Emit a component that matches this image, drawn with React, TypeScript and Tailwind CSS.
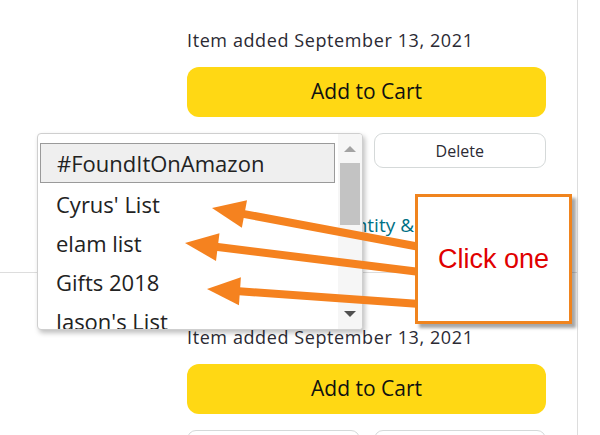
import React from 'react';

const lists = ["Cyrus' List", 'elam list', 'Gifts 2018', "Jason's List"];

// arrow from tail to tip, shaft + triangular head
const Arrow: React.FC<{ tail: [number, number]; tip: [number, number] }> = ({ tail, tip }) => {
  const dx = tip[0] - tail[0];
  const dy = tip[1] - tail[1];
  const len = Math.sqrt(dx * dx + dy * dy);
  const ux = dx / len;
  const uy = dy / len;
  const headLen = 33;
  const half = 14;
  const bx = tip[0] - ux * headLen;
  const by = tip[1] - uy * headLen;
  const p1 = `${bx - uy * half},${by + ux * half}`;
  const p2 = `${bx + uy * half},${by - ux * half}`;
  return (
    <g>
      <line x1={tail[0]} y1={tail[1]} x2={bx + ux * 4} y2={by + uy * 4} stroke="#F5821F" strokeWidth={8} />
      <polygon points={`${tip[0]},${tip[1]} ${p1} ${p2}`} fill="#F5821F" />
    </g>
  );
};

const ItemBlock: React.FC<{ top: string; children?: React.ReactNode }> = ({ top, children }) => (
  <div className={`pl-[187px] pr-[31px] ${top}`}>
    <p className="text-[18px] leading-[20px] tracking-[0.6px] text-[#2b2a33]">Item added September 13, 2021</p>
    <button className="mt-[17px] w-full h-[50px] rounded-[12px] bg-[#FFD814] text-[21px] text-[#0F1111]">
      Add to Cart
    </button>
    <div className="mt-[16px] flex gap-[14px]">
      <button className="flex-1 h-[35px] rounded-[9px] border border-[#d5d9d9] bg-white text-[16px] text-[#2b2a33]">
        Move
      </button>
      <button className="flex-1 h-[35px] rounded-[9px] border border-[#d5d9d9] bg-white text-[16px] text-[#2b2a33]">
        Delete
      </button>
    </div>
    {children}
  </div>
);

export default function App() {
  return (
    <div className="relative w-[600px] h-[435px] overflow-hidden bg-white font-['Open_Sans',sans-serif]">
      <div className="w-[578px] h-full border-r border-[#dddddd]">
        <div className="border-b border-[#dddddd] pb-[35px]">
          <ItemBlock top="pt-[30px]">
            <p className="mt-[45px] text-[19px] leading-[24px] text-[#007185]">Add comment, quantity &amp; priority</p>
          </ItemBlock>
        </div>
        <ItemBlock top="pt-[54px]" />
      </div>

      {/* dropdown list */}
      <div className="absolute left-[37px] top-[133px] w-[326px] h-[197px] flex rounded-[4px] border border-[#cfcfcf] bg-white shadow-[2px_3px_5px_rgba(0,0,0,0.25)] overflow-hidden">
        <div className="flex-1 pl-[2px] pt-[9px] pr-[3px]">
          <div className="h-[40px] flex items-center pl-[16px] border border-[#9a9a9a] bg-[#efefef] text-[22px] text-[#222]">
            #FoundItOnAmazon
          </div>
          <div className="pt-[2px]">
            {lists.map((l) => (
              <div key={l} className="h-[39px] flex items-center pl-[16px] text-[22px] text-[#222]">
                {l}
              </div>
            ))}
          </div>
        </div>
        <div className="w-[24px] flex flex-col items-center bg-[#f6f6f6]">
          <div className="mt-[12px] w-0 h-0 border-x-[6px] border-x-transparent border-b-[6px] border-b-[#a3a3a3]" />
          <div className="mt-[11px] w-[20px] h-[62px] bg-[#c3c3c3]" />
          <div className="mt-auto mb-[12px] w-0 h-0 border-x-[6px] border-x-transparent border-t-[6px] border-t-[#505050]" />
        </div>
      </div>

      {/* arrows */}
      <svg className="absolute inset-0" width={600} height={435}>
        <Arrow tail={[420, 247]} tip={[212, 208]} />
        <Arrow tail={[420, 272]} tip={[185, 243]} />
        <Arrow tail={[420, 304]} tip={[207, 289]} />
      </svg>

      {/* callout */}
      <div className="absolute left-[415px] top-[194px] w-[157px] h-[130px] flex items-center justify-center border-[3px] border-[#F0841E] bg-white shadow-[4px_4px_3px_rgba(0,0,0,0.35)]">
        <span className="font-['Liberation_Sans',Arial,sans-serif] text-[27px] text-[#e00000]">Click one</span>
      </div>
    </div>
  );
}
